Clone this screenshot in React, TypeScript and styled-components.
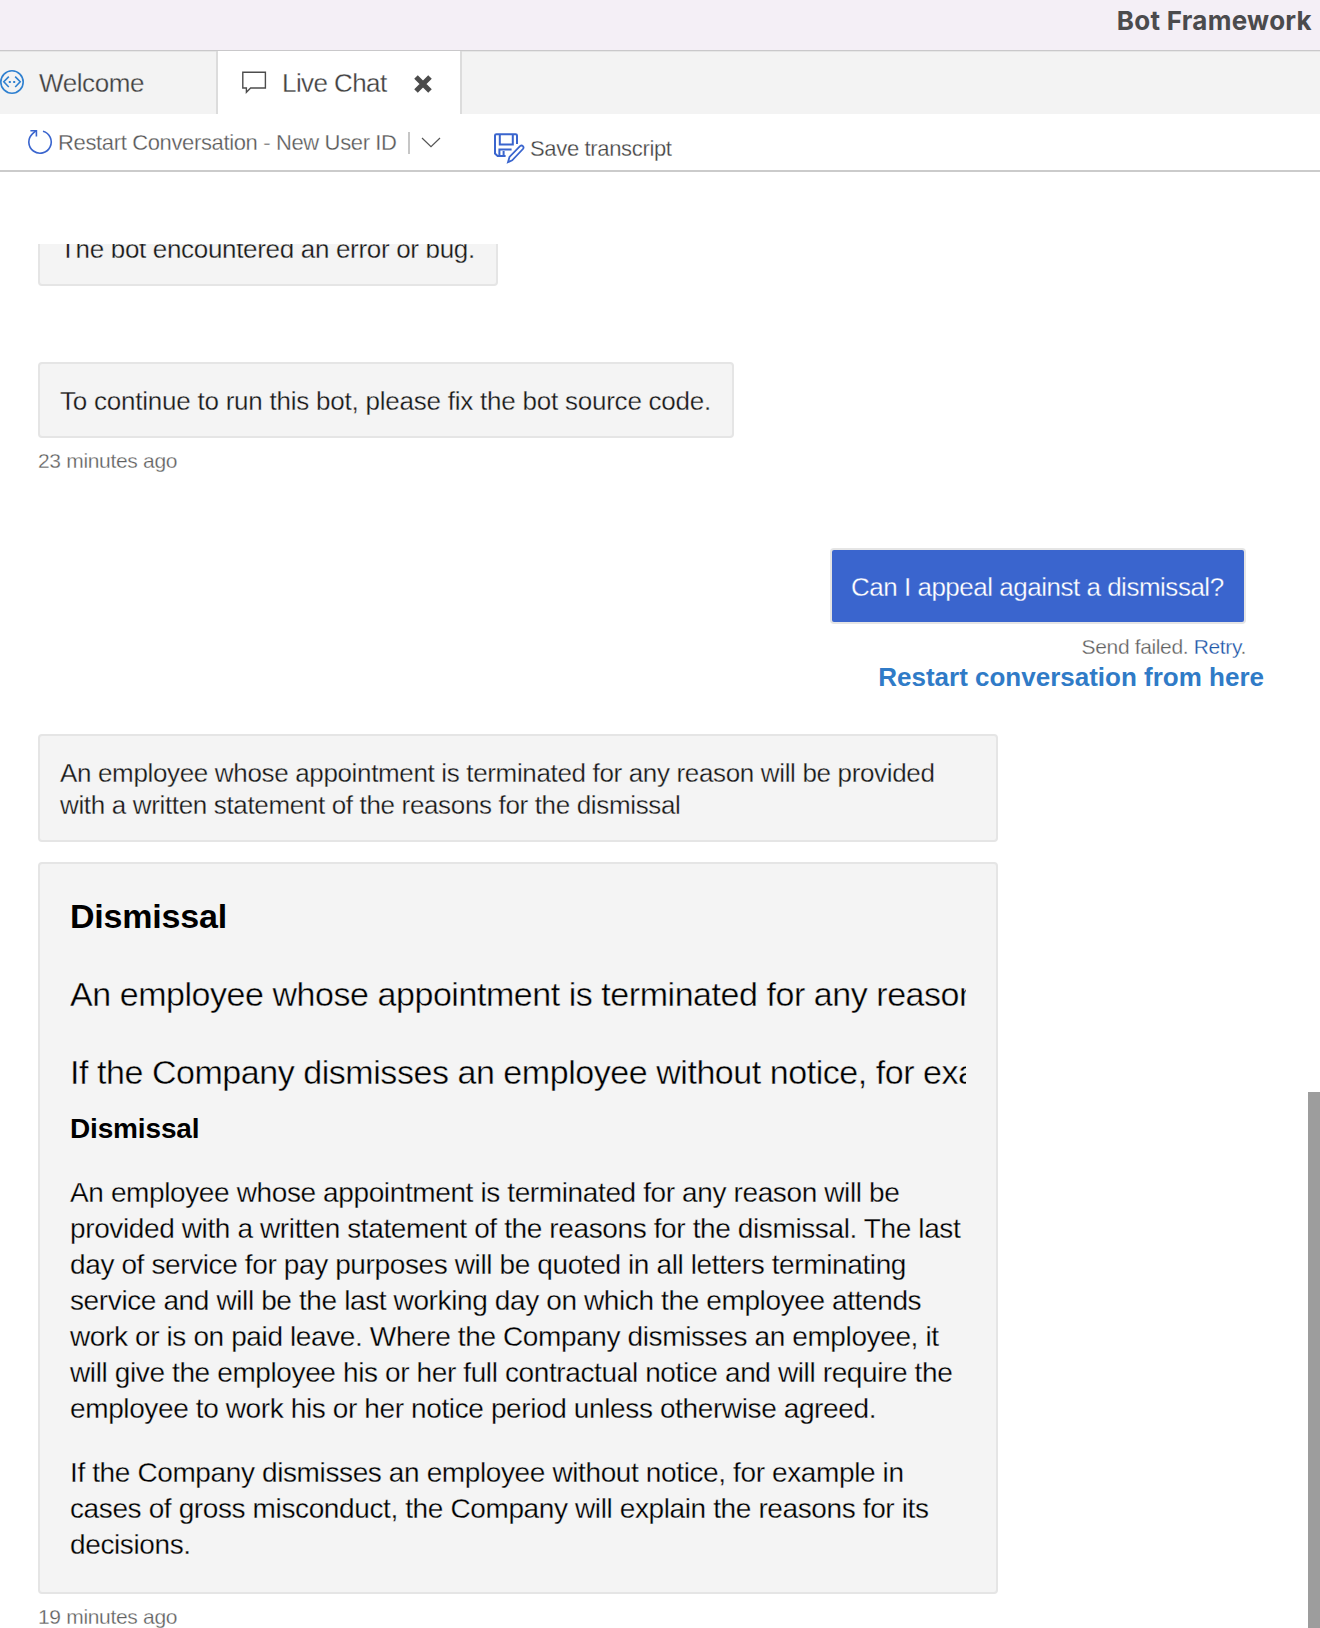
import React from 'react';
import styled, { createGlobalStyle, css } from 'styled-components';

const GlobalStyle = createGlobalStyle`
  * { box-sizing: border-box; }
  body {
    margin: 0;
    background: #fff;
    font-family: "Liberation Sans", Arial, sans-serif;
    overflow: hidden;
  }
  p { margin: 0; }
`;

// Trims the regular weight towards a light one with an outline in the surface colour.
const lightWeight = (surface: string) => css`
  -webkit-text-stroke: 0.28px ${surface};
`;

const Window = styled.div`
  display: flex;
  flex-direction: column;
  width: 1320px;
  height: 1628px;
  overflow: hidden;
`;

const TitleBar = styled.header`
  flex: none;
  height: 50px;
  padding-right: 8px;
  background: #f4eff6;
  color: #4b4b4d;
  font: bold 26px/41px Inter, sans-serif;
  letter-spacing: 0.28px;
  text-align: right;
`;

const TabBar = styled.nav`
  flex: none;
  display: flex;
  height: 64px;
  border-top: 1px solid #c9c8ca;
  background: #f3f3f3;
  box-shadow: inset 0 1px 0 #e6e6e6;
`;

const Tab = styled.div<{ $active?: boolean }>`
  display: flex;
  align-items: center;
  width: ${(p) => (p.$active ? 246 : 216)}px;
  padding-top: 1px;
  padding-left: ${(p) => (p.$active ? 24 : 0)}px;
  border: solid #dcdcdc;
  border-width: ${(p) => (p.$active ? '0 2px' : '0')};
  background: ${(p) => (p.$active ? '#fff' : 'transparent')};
  color: #404040;
  ${(p) => lightWeight(p.$active ? '#fff' : '#f3f3f3')}
`;

const TabLabel = styled.span<{ $spacing: number }>`
  margin-left: 15px;
  font-size: 26px;
  line-height: 30px;
  letter-spacing: ${(p) => p.$spacing}px;
  white-space: nowrap;
`;

const ChatGlyph = styled.svg`
  flex: none;
  margin-bottom: 2px;
`;

const CloseGlyph = styled.svg`
  flex: none;
  margin: 2px 0 0 27px;
`;

const Toolbar = styled.div`
  flex: none;
  display: flex;
  align-items: center;
  height: 58px;
  padding-left: 27px;
  border-bottom: 2px solid #cbcbcb;
`;

const ToolLabel = styled.span<{ $color: string; $spacing: number }>`
  margin-top: 2px;
  color: ${(p) => p.$color};
  font-size: 22px;
  line-height: 28px;
  letter-spacing: ${(p) => p.$spacing}px;
  white-space: nowrap;
  ${lightWeight('#fff')}
`;

const RestartTool = styled.div`
  display: flex;
  align-items: center;
  gap: 5px;
  width: 370px;
`;

const Separator = styled.div`
  width: 2px;
  height: 22px;
  margin: 2px 11px 0;
  background: #c6c6c6;
`;

const SaveTool = styled.div`
  display: flex;
  align-items: center;
  gap: 5px;
  margin: 12px 0 0 52px;
`;

const Body = styled.div`
  flex: 1;
  display: flex;
  justify-content: space-between;
  min-height: 0;
  padding-top: 72px;
`;

const Transcript = styled.main`
  display: flex;
  flex-direction: column;
  align-items: flex-start;
  width: 1308px;
  padding: 0 62px 0 38px;
  overflow: hidden;
`;

const Bubble = styled.div<{ $width: number; $top?: number; $user?: boolean; $spacing?: number }>`
  flex: none;
  width: ${(p) => p.$width}px;
  margin-top: ${(p) => p.$top ?? 0}px;
  padding: ${(p) => (p.$user ? '21px 17px 19px 19px' : '21px 20px 19px')};
  align-self: ${(p) => (p.$user ? 'flex-end' : 'flex-start')};
  border: 2px solid #e5e5e5;
  border-radius: 4px;
  background: ${(p) => (p.$user ? '#3a65ce' : '#f4f4f4')};
  color: ${(p) => (p.$user ? '#fff' : '#181818')};
  font-size: 26px;
  line-height: 32px;
  letter-spacing: ${(p) => p.$spacing ?? -0.345}px;
  white-space: ${(p) => (p.$width < 900 ? 'nowrap' : 'normal')};
  ${(p) => lightWeight(p.$user ? '#3a65ce' : '#f4f4f4')}
`;

const CardBubble = styled(Bubble)`
  padding: 29px 30px;
  color: #000;
`;

const Meta = styled.div<{ $right?: boolean }>`
  flex: none;
  margin-top: 9px;
  align-self: ${(p) => (p.$right ? 'flex-end' : 'flex-start')};
  color: #606060;
  font-size: 21px;
  line-height: 28px;
  letter-spacing: ${(p) => (p.$right ? -0.36 : -0.32)}px;
  ${lightWeight('#fff')}
`;

const RetryLink = styled.a`
  color: #1d56a8;
`;

const RestartLink = styled.a`
  flex: none;
  align-self: flex-end;
  margin-right: -18px;
  color: #307bc7;
  font-size: 26px;
  font-weight: bold;
  line-height: 32px;
`;

const Large = styled.p<{ $bold?: boolean }>`
  overflow: hidden;
  font-size: 34px;
  font-weight: ${(p) => (p.$bold ? 'bold' : 'normal')};
  line-height: 46px;
  letter-spacing: ${(p) => (p.$bold ? -0.2 : -0.45)}px;
  white-space: nowrap;
  -webkit-text-stroke-width: ${(p) => (p.$bold ? 0 : 0.4)}px;
  & + & { margin-top: 32px; }
`;

const CardHeading = styled.h2`
  margin: 16px 0 0;
  font-size: 28px;
  line-height: 36px;
  letter-spacing: -0.15px;
  -webkit-text-stroke-width: 0;
`;

const Paragraph = styled.p`
  margin-top: 28px;
  font-size: 28px;
  line-height: 36px;
  letter-spacing: -0.38px;
`;

const ScrollTrack = styled.div`
  flex: none;
  width: 12px;
  padding-top: 848px;
`;

const ScrollThumb = styled.div`
  height: 536px;
  background: #9d9d9d;
`;

const BotGlyph = styled.svg`
  flex: none;
  margin-bottom: 2px;
`;

const BotIcon = () => (
  <BotGlyph width="24" height="24" viewBox="0 0 24 24" fill="none" stroke="#2f80d0" strokeWidth="1.6">
    <circle cx="12" cy="12" r="11.2" />
    <path d="M8.8 6.6 3.8 11.8l5 5.2M15.2 6.6l5 5.2-5 5.2" />
    <path d="M8.8 12h2M13.2 12h2" strokeWidth="2" />
  </BotGlyph>
);

const RestartIcon = () => (
  <svg width="26" height="26" viewBox="0 0 26 26" fill="none" stroke="#3a65ce" strokeWidth="1.6">
    <path d="M16 2.2A11.2 11.2 0 1 1 5.4 4.8L9 1.6" />
    <path d="M3.4 1.7h6v5.8" />
  </svg>
);

const SaveIcon = () => (
  <svg width="32" height="32" viewBox="0 0 32 32" fill="none" stroke="#3a65ce" strokeWidth="2">
    <path d="M12.6 24H4.6L2 21.6V3.6Q2 2.2 3.4 2.2H22.6Q24 2.2 24 3.6V12" />
    <path d="M6.8 2.2V12.4H19.8V2.2" />
    <path d="M6.4 24V17.4H18.6M10.6 19V24" />
    <path d="M15 30.2l1.5-5.2L27 14.1q1.6-1.2 2.9 0t0 2.9L19.2 28.3z" strokeWidth="1.8" />
  </svg>
);

export default function App() {
  return (
    <Window>
      <GlobalStyle />
      <TitleBar>Bot Framework</TitleBar>
      <TabBar>
        <Tab>
          <BotIcon />
          <TabLabel $spacing={-0.42}>Welcome</TabLabel>
        </Tab>
        <Tab $active>
          <ChatGlyph width="25" height="23" viewBox="0 0 25 23" fill="none" stroke="#4c4c4c" strokeWidth="1.4">
            <path d="M.8 1.2H23.4V17H8.6L4.4 21.2V17H.8z" />
          </ChatGlyph>
          <TabLabel $spacing={-0.58}>Live Chat</TabLabel>
          <CloseGlyph width="18" height="18" viewBox="0 0 18 18" stroke="#4c4c4c" strokeWidth="5">
            <path d="M2 2l14 14M16 2 2 16" />
          </CloseGlyph>
        </Tab>
      </TabBar>
      <Toolbar>
        <RestartTool>
          <RestartIcon />
          <ToolLabel $color="#585858" $spacing={-0.36}>Restart Conversation - New User ID</ToolLabel>
        </RestartTool>
        <Separator />
        <svg width="20" height="12" viewBox="0 0 20 12" fill="none" stroke="#555" strokeWidth="1.2">
          <path d="M1 2l9 8.6L19 2" />
        </svg>
        <SaveTool>
          <SaveIcon />
          <ToolLabel $color="#424242" $spacing={-0.34}>Save transcript</ToolLabel>
        </SaveTool>
      </Toolbar>
      <Body>
        <Transcript>
          <Bubble $width={460} $top={-34} $spacing={-0.32}>The bot encountered an error or bug.</Bubble>
          <Bubble $width={696} $top={76} $spacing={-0.23}>
            To continue to run this bot, please fix the bot source code.
          </Bubble>
          <Meta>23 minutes ago</Meta>
          <Bubble $width={416} $top={73} $user $spacing={-0.49}>Can I appeal against a dismissal?</Bubble>
          <Meta $right>
            Send failed. <RetryLink>Retry</RetryLink>.
          </Meta>
          <RestartLink>Restart conversation from here</RestartLink>
          <Bubble $width={960} $top={41}>
            An employee whose appointment is terminated for any reason will be provided with a written statement of
            the reasons for the dismissal
          </Bubble>
          <CardBubble $width={960} $top={20}>
            <Large $bold>Dismissal</Large>
            <Large>An employee whose appointment is terminated for any reason will be provided</Large>
            <Large>If the Company dismisses an employee without notice, for example in cases</Large>
            <CardHeading>Dismissal</CardHeading>
            <Paragraph>
              An employee whose appointment is terminated for any reason will be provided with a written statement of
              the reasons for the dismissal. The last day of service for pay purposes will be quoted in all letters
              terminating service and will be the last working day on which the employee attends work or is on paid
              leave. Where the Company dismisses an employee, it will give the employee his or her full contractual
              notice and will require the employee to work his or her notice period unless otherwise agreed.
            </Paragraph>
            <Paragraph>
              If the Company dismisses an employee without notice, for example in cases of gross misconduct, the
              Company will explain the reasons for its decisions.
            </Paragraph>
          </CardBubble>
          <Meta>19 minutes ago</Meta>
        </Transcript>
        <ScrollTrack>
          <ScrollThumb />
        </ScrollTrack>
      </Body>
    </Window>
  );
}
